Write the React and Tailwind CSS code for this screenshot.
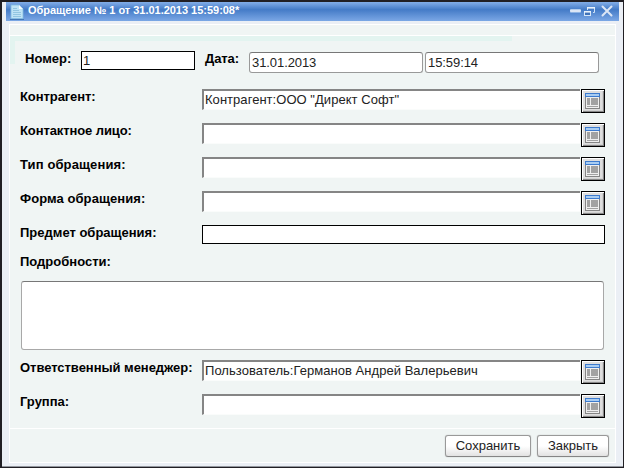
const PickerIcon = () => (
  <svg width="15" height="16" viewBox="0 0 15 16" shapeRendering="crispEdges">
    <rect x="0.5" y="0.5" width="14" height="15" fill="#efefef" stroke="#858585" />
    <rect x="0" y="0" width="15" height="4" fill="#3d7bce" />
    <rect x="1" y="1" width="13" height="2" fill="#a9cdf2" />
    <rect x="2" y="5" width="3" height="7" fill="#a2a2a2" />
    <rect x="6" y="5" width="7" height="7" fill="#a2a2a2" />
    <rect x="2" y="13" width="11" height="1" fill="#a2a2a2" />
  </svg>
);

const DocumentIcon = () => (
  <svg width="14" height="16" viewBox="0 0 14 16">
    <path d="M1 1h8l4 4v9.500H1z" fill="#bfe3f5" stroke="#83bce0" strokeWidth="0.8" />
    <path d="M9 1v4h4z" fill="#f4fcff" />
    <path d="M3 4.500h4M3 6.500h6M3 8.500h8M3 10.500h8M3 12.500h8" stroke="#8cc3df" strokeWidth="0.900" />
    <path d="M0 15.500h14" stroke="#376ca9" strokeWidth="0.800" />
  </svg>
);

const WindowControls = () => (
  <svg width="45" height="14" viewBox="0 0 45 14">
    <rect x="1" y="5" width="11" height="4" rx="1" fill="#8fb4e4" />
    <rect x="1" y="5.500" width="11" height="2.500" rx="1" fill="#dce6f5" />
    <path d="M18.500 6V3.500h7v5H24" fill="none" stroke="#cfe3f7" />
    <path d="M18 3.800h8" stroke="#e9f2fb" strokeWidth="1.600" />
    <rect x="15.500" y="7.500" width="6" height="4" fill="#3f72ba" stroke="#d5e6f8" />
    <path d="M15 7.800h7" stroke="#e9f2fb" strokeWidth="1.600" />
    <path d="M33.500 2.500l9 9M42.500 2.500l-9 9" stroke="#dce6f5" strokeWidth="2" strokeLinecap="round" />
  </svg>
);

const Label = ({ children, className = "" }) => (
  <div className={`shrink-0 font-bold text-black leading-[15px] ${className}`}>{children}</div>
);

const ReferenceRow = ({ label, value = "", labelClass = "" }) => (
  <div className="flex h-[34px] items-start">
    <Label className={`w-[182px] ${labelClass}`}>{label}</Label>
    <div className="h-[21px] w-[378px] border-t-2 border-l-2 border-b border-[#858585] border-b-[#fafcfb] bg-white pl-[1px] leading-[18px] tracking-[0.04px]">
      {value}
    </div>
    <button className="ml-[1px] flex h-6 w-6 items-start justify-start border border-black bg-[#dedede] pt-[3px] pl-[3px] shadow-[inset_1px_1px_0_#fff,inset_-1px_-1px_0_#888,inset_-2px_-2px_0_#d0d0d0]">
      <PickerIcon />
    </button>
  </div>
);

const RoundedField = ({ children }) => (
  <div className="h-[21px] w-[174px] rounded-[3px] border border-[#999] border-t-[#777] bg-white pl-[2px] leading-[20px] tracking-[-0.08px]">
    {children}
  </div>
);

const ActionButton = ({ children, className }) => (
  <button className={`h-[22px] rounded-[3px] border border-[#999] border-b-[#858585] bg-linear-to-b from-white from-50% to-[#e2e2e2] text-center leading-[20px] shadow-[0_0_1px_#999] ${className}`}>
    {children}
  </button>
);

export default function App() {
  return (
    <div className="h-[468px] w-[624px] overflow-hidden whitespace-nowrap border-t-2 border-r border-b border-l-2 border-[#211f24] bg-[#ebeff5] text-[13px] text-[#222] [font-family:'Liberation_Sans',Arial,sans-serif]">
      <div className="flex h-[465px] flex-col border-b border-[#92969d] pr-[4px] pl-[4px]">
        <header className="flex h-[19px] shrink-0 items-start bg-linear-to-b from-[#83aee8] via-[#447bc7] via-40% to-[#7ba7e5] pl-[4px]">
          <div className="pt-[2px]"><DocumentIcon /></div>
          <div className="ml-[4px] flex-1 text-[11px] leading-[16px] font-bold tracking-[-0.02px] text-white">Обращение № 1 от 31.01.2013 15:59:08*</div>
          <div className="mt-[2px] mr-[5px]"><WindowControls /></div>
        </header>

        <main className="mt-[3px] mr-[3px] ml-[3px] flex h-[439px] shrink-0 flex-col border border-white bg-[#f0f5f4]">
          <div className="h-[11px] shrink-0 border-b border-white" />
          <div className="h-[5px] w-[502px] shrink-0 bg-[#e3f4f0]" />
          <div className="flex h-[48px] shrink-0">
            <div className="h-[23px] w-[5px] bg-[#e3f4f0]" />
            <Label className="ml-[10px] w-[56px] pt-[10px]">Номер:</Label>
            <div className="mt-[10px] h-[19px] w-[114px] border border-black bg-white pl-[1px] leading-[18px]">1</div>
            <Label className="ml-[10px] w-[44px] pt-[10px] tracking-[-0.1px]">Дата:</Label>
            <div className="flex gap-[2px] pt-[11px]">
              <RoundedField>31.01.2013</RoundedField>
              <RoundedField>15:59:14</RoundedField>
            </div>
          </div>

          <div className="flex h-[339px] shrink-0 flex-col pl-[10px]">
            <ReferenceRow label="Контрагент:" value={'Контрагент:ООО "Директ Софт"'} labelClass="tracking-[-0.08px]" />
            <ReferenceRow label="Контактное лицо:" labelClass="tracking-[-0.1px]" />
            <ReferenceRow label="Тип обращения:" labelClass="tracking-[0.12px]" />
            <ReferenceRow label="Форма обращения:" labelClass="tracking-[0.07px]" />
            <div className="flex h-[29px] items-start">
              <Label className="w-[182px]">Предмет обращения:</Label>
              <div className="h-[19px] w-[403px] border border-black bg-white" />
            </div>
            <Label className="h-[27px]">Подробности:</Label>
            <div className="mb-[10px] ml-[1px] h-[69px] w-[583px] shrink-0 rounded-[3px] border border-[#a8a8a8] border-t-[#777] bg-white" />
            <ReferenceRow label="Ответственный менеджер:" value="Пользователь:Германов Андрей Валерьевич" labelClass="tracking-[-0.04px]" />
            <ReferenceRow label="Группа:" />
          </div>

          <footer className="flex flex-1 items-start justify-end gap-[6px] border-t border-white pt-[6px] pr-[6px]">
            <ActionButton className="w-[86px]">Сохранить</ActionButton>
            <ActionButton className="w-[72px]">Закрыть</ActionButton>
          </footer>
        </main>
      </div>
    </div>
  );
}
